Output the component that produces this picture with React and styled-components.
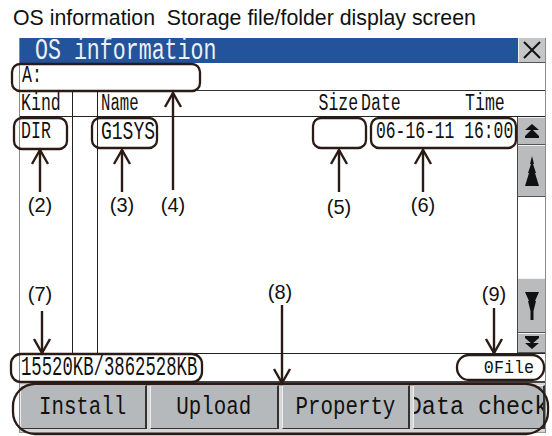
import React from 'react';
import styled, { createGlobalStyle } from 'styled-components';

const GlobalStyle = createGlobalStyle`
  html, body { margin: 0; padding: 0; background: #fff; }
  body { font-family: "Liberation Sans", Arial, sans-serif; }
`;

const INK = '#2a1b15';

const Page = styled.div`
  position: relative;
  width: 552px;
  height: 436px;
  box-sizing: border-box;
  padding-top: 6px;
  overflow: hidden;
  background: #fff;
`;

const Heading = styled.h1`
  margin: 0 0 8px 13px;
  font-size: 21.3px;
  font-weight: normal;
  line-height: 24px;
  color: #111;
  white-space: pre;
`;

// the panel's narrow, tall bitmap-like font
const Mono = styled.span`
  display: inline-block;
  font-family: "Liberation Mono", "DejaVu Sans Mono", monospace;
  font-size: ${p => p.$size || 23}px;
  line-height: 1;
  white-space: pre;
  color: ${p => p.$color || '#111'};
  transform: scaleX(${p => p.$sx || 0.72});
  transform-origin: ${p => p.$origin || 'left'} center;
`;

const Window = styled.div`
  width: 527px;
  margin-left: 19px;
  box-sizing: border-box;
  border-left: 1px solid #8a8a8a;
  border-right: 1px solid #8a8a8a;
  display: flex;
  flex-direction: column;
`;

const TitleBar = styled.div`
  height: 25px;
  display: flex;
`;

const Title = styled.div`
  flex: 1;
  min-width: 0;
  background: #23539b;
  display: flex;
  align-items: center;
  padding-left: 15px;
`;

const CloseButton = styled.div`
  width: 27px;
  box-sizing: border-box;
  background: #c4c6c8;
  border-left: 1px solid #eee;
  border-bottom: 1px solid #555;
  display: flex;
  align-items: center;
  justify-content: center;
`;

const PathRow = styled.div`
  height: 27px;
  border-bottom: 1px solid #333;
  display: flex;
  align-items: center;
  padding-left: 2px;
`;

const FileList = styled.div`
  display: grid;
  grid-template-columns: 53px 25px minmax(0, 1fr) 28px;
  grid-template-rows: 26px 236px;
`;

const HeadCell = styled.div`
  box-sizing: border-box;
  min-width: 0;
  border-bottom: 1px solid #222;
  border-right: ${p => (p.$divider ? '1px solid #222' : 'none')};
  grid-column: ${p => p.$span || 'auto'};
  display: flex;
  align-items: center;
  padding-left: ${p => p.$pad || 0}px;
  padding-top: 2px;
`;

const HeadText = styled.div`
  flex: 0 0 ${p => p.$w}px;
  width: ${p => p.$w}px;
  min-width: 0;
  margin-left: ${p => p.$ml || 0}px;
  display: flex;
  justify-content: ${p => (p.$align === 'right' ? 'flex-end' : 'flex-start')};
`;

const Column = styled.div`
  box-sizing: border-box;
  min-width: 0;
  border-right: ${p => (p.$divider ? '1px solid #222' : 'none')};
  display: flex;
  flex-direction: column;
  padding-left: ${p => p.$pad || 0}px;
`;

const DataRow = styled.div`
  height: 26px;
  display: flex;
  align-items: center;
  padding-top: 2px;
`;

const DataCell = styled.div`
  flex: ${p => (p.$w ? `0 0 ${p.$w}px` : '1 1 auto')};
  min-width: 0;
`;

const Scrollbar = styled.div`
  border-left: 1px solid #444;
  display: flex;
  flex-direction: column;
`;

const ScrollButton = styled.div`
  height: ${p => p.$h}px;
  box-sizing: border-box;
  background: #b9bbbd;
  border-top: 1px solid #f0f0f0;
  border-bottom: 1px solid #555;
  display: flex;
  align-items: center;
  justify-content: center;
`;

const ScrollTrack = styled.div`
  flex: 1;
  background: #fff;
`;

const StatusRow = styled.div`
  height: 26px;
  border-top: 1px solid #222;
  border-bottom: 2px solid #444;
  display: flex;
  align-items: center;
  justify-content: space-between;
  padding: 1px 11px 0 1px;
`;

const ButtonBar = styled.div`
  display: grid;
  grid-template-columns: 127px 129px 128px minmax(0, 1fr);
  column-gap: 3px;
  background: #d6d6d6;
  padding: 2px 0 3px;
  border-bottom: 1px solid #999;
`;

const PanelButton = styled.div`
  height: 44px;
  min-width: 0;
  box-sizing: border-box;
  background: #b6b9bb;
  border: 1px solid;
  border-color: #eee #333 #333 #eee;
  border-right-width: 2px;
  display: flex;
  align-items: center;
  justify-content: center;
  overflow: hidden;
`;

const Overlay = styled.svg`
  position: absolute;
  left: 0;
  top: 0;
  pointer-events: none;
`;

const Label = styled.div`
  position: absolute;
  left: ${p => p.$x}px;
  top: ${p => p.$y}px;
  transform: translateX(-50%);
  font-size: 20px;
  line-height: 1;
  color: #111;
`;

const Callout = ({ x, y, w, h, r = 8 }) => (
  <rect x={x} y={y} width={w} height={h} rx={r} fill="none" stroke={INK} strokeWidth="2.3" />
);

const Arrow = ({ x, from, to }) => {
  const d = to > from ? 1 : -1;
  return (
    <g stroke={INK} strokeWidth="2.4" fill="none">
      <line x1={x} y1={from} x2={x} y2={to} />
      <polyline points={`${x - 8},${to - d * 14} ${x},${to} ${x + 8},${to - d * 14}`} />
    </g>
  );
};

const CloseIcon = () => (
  <svg width="18" height="18" viewBox="0 0 18 18">
    <path d="M1 1L17 17M17 1L1 17" stroke="#111" strokeWidth="2" />
  </svg>
);

const DoubleUp = () => (
  <svg width="16" height="15" viewBox="0 0 16 15">
    <path d="M8 0L15 6H1Z M8 5L15 12H1Z M1 12H15V14H1Z" fill="#111" />
  </svg>
);

const UpSpire = () => (
  <svg width="14" height="30" viewBox="0 0 14 30">
    <path d="M7 0L9 8H8L11 17H10L14 30H0L4 17H3L6 8H5Z" fill="#111" />
  </svg>
);

const DownSpire = () => (
  <svg width="14" height="28" viewBox="0 0 14 28">
    <path d="M0 0H14L10 9H11L8.5 19V28H5.5V19L3 9H4Z" fill="#111" />
  </svg>
);

const DoubleDown = () => (
  <svg width="16" height="14" viewBox="0 0 16 14">
    <path d="M1 0H15V2H1Z M1 2H15L8 8Z M1 7H15L8 13Z" fill="#111" />
  </svg>
);

const buttons = [
  { label: 'Install', sx: 0.8 },
  { label: 'Upload', sx: 0.8 },
  { label: 'Property', sx: 0.8 },
  { label: 'Data check', sx: 0.9 },
];

const arrows = [
  { x: 40, from: 192, to: 150 },
  { x: 122, from: 192, to: 150 },
  { x: 173, from: 190, to: 93 },
  { x: 339, from: 192, to: 150 },
  { x: 423, from: 192, to: 150 },
  { x: 42, from: 311, to: 353 },
  { x: 282, from: 305, to: 383 },
  { x: 494, from: 308, to: 353 },
];

const labels = [
  { n: 2, x: 40, y: 195 },
  { n: 3, x: 122, y: 195 },
  { n: 4, x: 173, y: 195 },
  { n: 5, x: 339, y: 197 },
  { n: 6, x: 423, y: 195 },
  { n: 7, x: 40, y: 284 },
  { n: 8, x: 280, y: 282 },
  { n: 9, x: 494, y: 284 },
];

export default function App() {
  return (
    <Page>
      <GlobalStyle />
      <Heading>{'OS information  Storage file/folder display screen'}</Heading>

      <Window>
        <TitleBar>
          <Title>
            <Mono $size={30} $sx={0.72} $color="#eef0f4">OS information</Mono>
          </Title>
          <CloseButton>
            <CloseIcon />
          </CloseButton>
        </TitleBar>

        <PathRow>
          <Mono>A:</Mono>
        </PathRow>

        <FileList>
          <HeadCell $divider $pad={1}>
            <Mono>Kind</Mono>
          </HeadCell>
          <HeadCell $divider />
          <HeadCell $span="3 / 5" $pad={3}>
            <HeadText $w={223}>
              <Mono $sx={0.68}>Name</Mono>
            </HeadText>
            <HeadText $w={34} $align="right">
              <Mono $origin="right">Size</Mono>
            </HeadText>
            <HeadText $w={104} $ml={3}>
              <Mono>Date</Mono>
            </HeadText>
            <HeadText $w={40}>
              <Mono>Time</Mono>
            </HeadText>
          </HeadCell>

          <Column $divider $pad={1}>
            <DataRow>
              <Mono>DIR</Mono>
            </DataRow>
          </Column>
          <Column $divider />
          <Column $pad={3}>
            <DataRow>
              <DataCell $w={275}>
                <Mono $size={25} $sx={0.72}>G1SYS</Mono>
              </DataCell>
              <DataCell>
                <Mono $sx={0.71}>06-16-11 16:00</Mono>
              </DataCell>
            </DataRow>
          </Column>
          <Scrollbar>
            <ScrollButton $h={28}>
              <DoubleUp />
            </ScrollButton>
            <ScrollButton $h={52}>
              <UpSpire />
            </ScrollButton>
            <ScrollTrack />
            <ScrollButton $h={55}>
              <DownSpire />
            </ScrollButton>
            <ScrollButton $h={20}>
              <DoubleDown />
            </ScrollButton>
          </Scrollbar>
        </FileList>

        <StatusRow>
          <Mono $size={27} $sx={0.64}>15520KB/3862528KB</Mono>
          <Mono $size={19} $sx={0.88} $origin="right">0File</Mono>
        </StatusRow>

        <ButtonBar>
          {buttons.map(b => (
            <PanelButton key={b.label}>
              <Mono $size={26} $sx={b.sx} $origin="center">{b.label}</Mono>
            </PanelButton>
          ))}
        </ButtonBar>
      </Window>

      <Overlay width="552" height="436" viewBox="0 0 552 436">
        <Callout x={12} y={64} w={188} h={27} />
        <Callout x={14} y={118} w={53} h={31} />
        <Callout x={92} y={118} w={65} h={30} />
        <Callout x={313} y={118} w={53} h={30} />
        <Callout x={371} y={118} w={145} h={30} />
        <Callout x={11} y={354} w={191} h={28} r={10} />
        <Callout x={457} y={355} w={87} h={25} r={12} />
        <Callout x={13} y={384} w={535} h={50} r={22} />
        {arrows.map((a, i) => (
          <Arrow key={i} {...a} />
        ))}
      </Overlay>
      {labels.map(l => (
        <Label key={l.n} $x={l.x} $y={l.y}>
          ({l.n})
        </Label>
      ))}
    </Page>
  );
}
